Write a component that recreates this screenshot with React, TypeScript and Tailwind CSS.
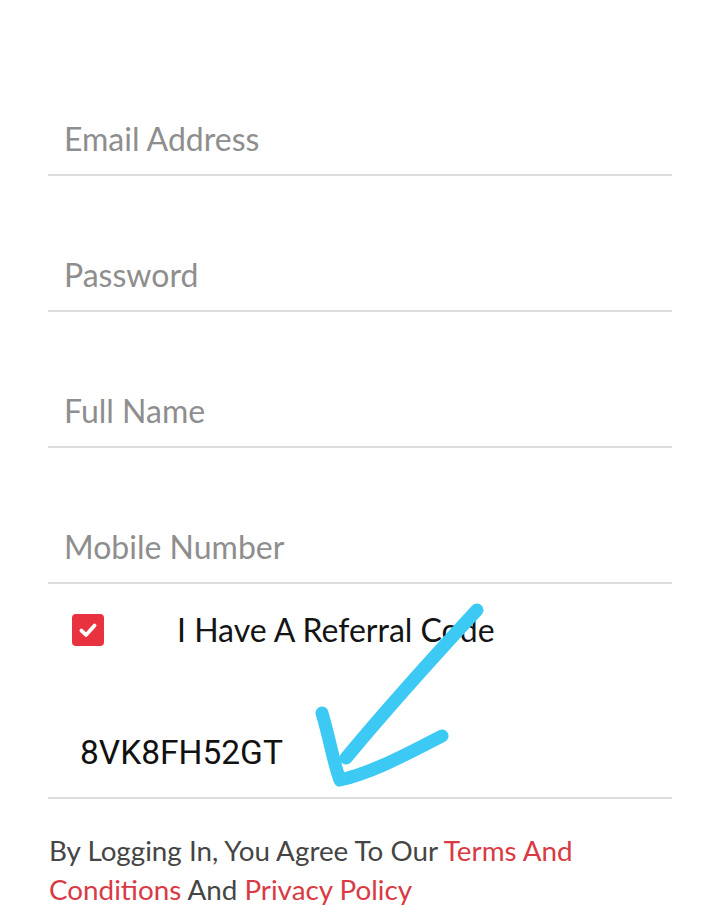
import React from "react";

const Field = ({ label }: { label: string }) => (
  <div className="h-[136px] flex items-end border-b-2 border-[#dcdcdc] pl-[16px] pb-[15px]">
    <span className="text-[32px] leading-[40px] text-[#8e8e8e]">{label}</span>
  </div>
);

export default function App() {
  return (
    <div
      className="relative w-[720px] h-[920px] bg-white overflow-hidden"
      style={{ fontFamily: "Lato, 'Noto Sans', sans-serif" }}
    >
      <div className="mx-[48px] pt-[40px]">
        <Field label="Email Address" />
        <Field label="Password" />
        <Field label="Full Name" />
        <Field label="Mobile Number" />
        <div className="h-[92px] flex items-center pl-[24px]">
          <div className="w-[32px] h-[32px] rounded-[4px] bg-[#e8323f] flex items-center justify-center">
            <svg width="22" height="22" viewBox="0 0 20 20">
              <path d="M4 10.5 L8.2 14.5 L16 6" fill="none" stroke="white" strokeWidth="3.4" strokeLinecap="round" strokeLinejoin="round" />
            </svg>
          </div>
          <span className="ml-[73px] text-[32px] leading-[40px] text-[#141414]">I Have A Referral Code</span>
        </div>
        <div className="h-[123px] flex items-end border-b-2 border-[#dcdcdc] pl-[32px] pb-[24px]">
          <span className="text-[33.5px] leading-[40px] text-[#111]" style={{ fontFamily: "Roboto, sans-serif" }}>8VK8FH52GT</span>
        </div>
        <p className="mt-[32px] text-[27.8px] leading-[39px] text-[#454545] pl-[1px]">
          By Logging In, You Agree To Our <span className="text-[#d93a44]">Terms And Conditions</span> And{" "}
          <span className="text-[#d93a44]">Privacy Policy</span>
        </p>
      </div>
      <svg className="absolute left-0 top-0 pointer-events-none" width="720" height="920" viewBox="0 0 720 920">
        <path
          d="M477 610 C 440 650, 390 705, 346 758"
          fill="none"
          stroke="#3cc9f4"
          strokeWidth="13"
          strokeLinecap="round"
        />
        <path
          d="M322 713 C 330 740, 334 765, 340 780 C 375 772, 410 752, 442 736"
          fill="none"
          stroke="#3cc9f4"
          strokeWidth="13"
          strokeLinecap="round"
          strokeLinejoin="round"
        />
      </svg>
    </div>
  );
}
